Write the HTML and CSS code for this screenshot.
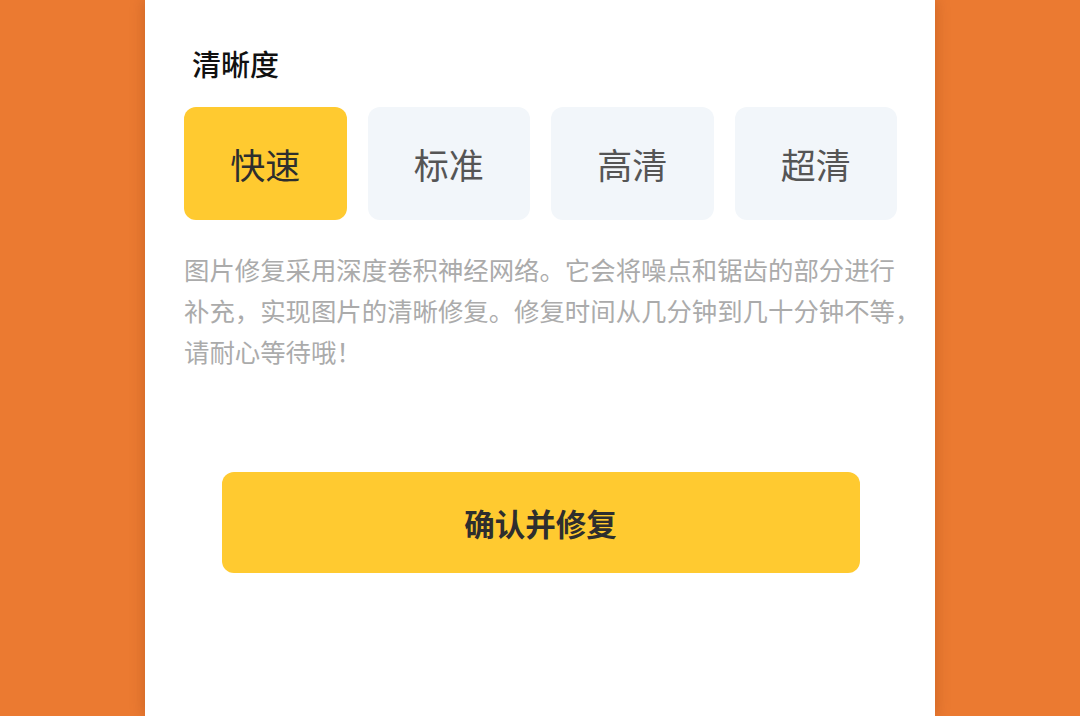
FILE: index.html
```html
<!DOCTYPE html>
<html lang="zh-CN">
<head>
<meta charset="UTF-8">
<meta name="viewport" content="width=device-width, initial-scale=1.0">
<title>图片修复</title>
<link rel="stylesheet" href="styles.css">
</head>
<body>
    <div class="panel">
        <h2 class="section-title">清晰度</h2>
        <div class="quality-options">
            <div class="option active">快速</div>
            <div class="option">标准</div>
            <div class="option">高清</div>
            <div class="option">超清</div>
        </div>
        <p class="desc">
            <span class="line">图片修复采用深度卷积神经网络。它会将噪点和锯齿的部分进行</span>
            <span class="line">补充，实现图片的清晰修复。修复时间从几分钟到几十分钟不等，</span>
            <span class="line">请耐心等待哦！</span>
        </p>
        <button class="confirm-btn" type="button">确认并修复</button>
    </div>
</body>
</html>
```

FILE: styles.css
```css
body {
    margin: 0;
    min-height: 100vh;
    background-color: #eb7a31;
    display: flex;
    justify-content: center;
    font-family: "Noto Sans CJK SC", "Noto Sans", sans-serif;
    overflow: hidden;
}

.panel {
    width: 790px;
    min-height: 100vh;
    box-sizing: border-box;
    padding: 43px 38px 0 39px;
    background-color: #fff;
    box-shadow: 0 0 14px rgba(110, 40, 0, 0.28);
}

.section-title {
    margin: 0 0 24px 8px;
    font-size: 29px;
    line-height: 40px;
    font-weight: 500;
    color: #111;
}

.quality-options {
    display: grid;
    grid-template-columns: repeat(4, 1fr);
    gap: 21px;
}

.option {
    height: 113px;
    line-height: 113px;
    text-align: center;
    border-radius: 12px;
    background-color: #f2f6fa;
    color: #555;
    font-size: 35px;
}

.option.active {
    background-color: #ffca30;
    color: #2e2e2e;
}

.desc {
    margin: 29px 0 0;
    font-size: 25.4px;
    line-height: 41px;
    color: #ababab;
}

.desc .line {
    display: block;
    white-space: nowrap;
}

.confirm-btn {
    display: block;
    width: 638px;
    height: 101px;
    margin: 100px auto 0;
    border: none;
    border-radius: 12px;
    background-color: #ffca30;
    color: #2e2e2e;
    font-family: inherit;
    font-size: 30.5px;
    font-weight: bold;
    cursor: pointer;
}
```
